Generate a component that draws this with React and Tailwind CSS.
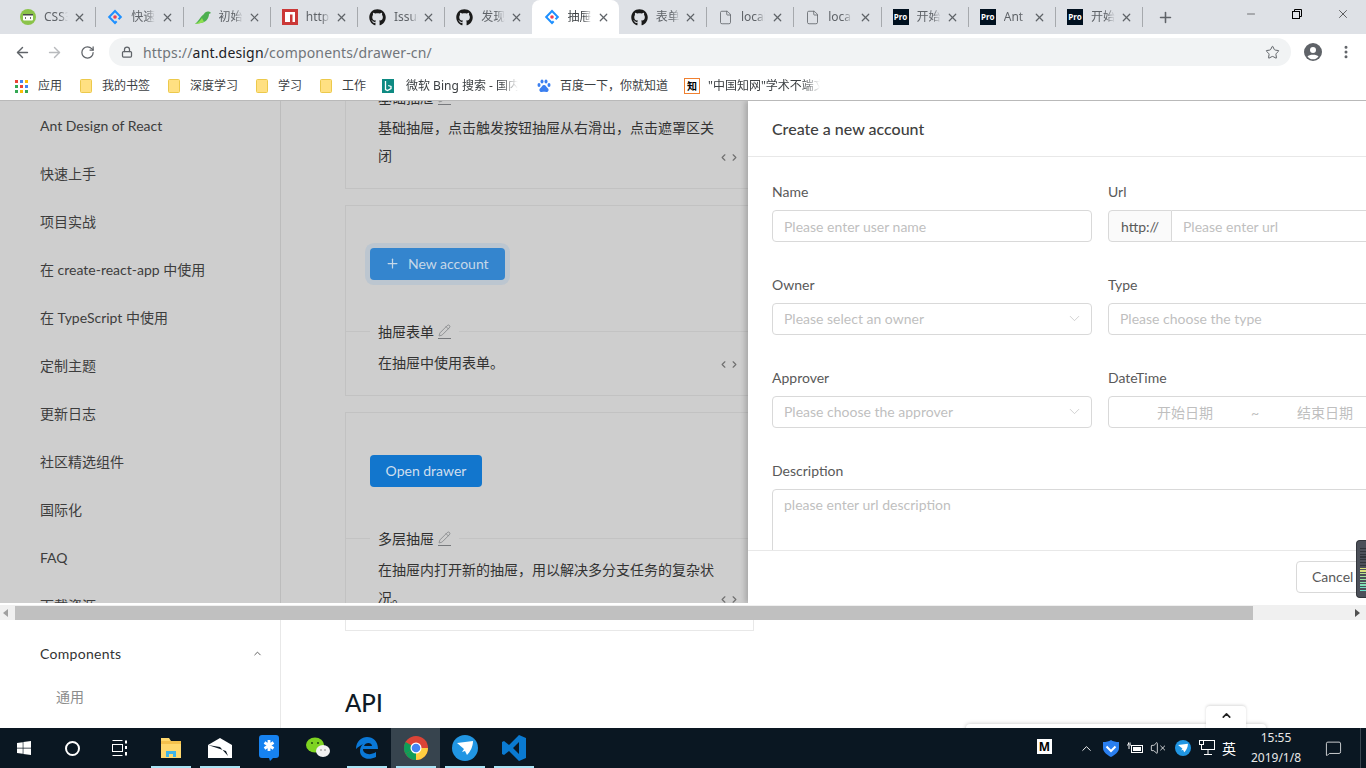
import React from 'react';
import { FaGithub, FaWindows } from 'react-icons/fa';
import { Plus, Minus, X, ArrowLeft, ArrowRight, RotateCw, Lock, Star, EllipsisVertical, ChevronUp, ChevronDown, ChevronLeft, ChevronRight, Pencil, File, VolumeX, MessageSquare } from 'lucide-react';

const AntLogo = ({ size = 16 }) => (
    <svg width={size} height={size} viewBox="0 0 16 16">
        <path d="M8 .5 .8 8 8 15.5l2.4-2.5-1.5-1.4-.9.9L3.6 8 8 3.5l4.4 4.5-1.6 1.6 1.5 1.4L15.2 8z" fill="#1e90ff" />
        <circle cx="8" cy="8" r="1.8" fill="#f04050" />
    </svg>
);

const CssIcon = () => (
    <svg width="16" height="16" viewBox="0 0 16 16">
        <circle cx="8" cy="8" r="8" fill="#8bc34a" />
        <rect x="3" y="5" width="10" height="6.5" rx="1" fill="#fff" />
        <rect x="3" y="5" width="10" height="1.5" fill="#4a4a4a" />
        <path d="M6 8 5 9l1 1M10 8l1 1-1 1" stroke="#4a4a4a" strokeWidth=".8" fill="none" />
    </svg>
);

const BirdIcon = () => (
    <svg width="16" height="16" viewBox="0 0 16 16">
        <path d="M0 15C3 13 5 8 9 5c1-2 3-3 6-2l1 1-2 1c0 5-4 9-9 9-2 0-3 1-5 1z" fill="#4caf50" />
        <path d="M0 15c3-1 5-3 7-6l2 4c-3 1-6 2-9 2z" fill="#8ee04e" />
    </svg>
);

const NpmIcon = () => (
    <svg width="16" height="16" viewBox="0 0 16 16">
        <rect width="16" height="16" fill="#cb3837" />
        <path d="M3 3h10v10h-2.500V5.500H8V13H3z" fill="#fff" />
    </svg>
);

const ProIcon = () => (
    <span className="w-4 h-4 bg-[#00101f] text-white text-[8px] font-bold flex items-center justify-center shrink-0">Pro</span>
);

const Github16 = () => <FaGithub className="text-[17px] text-[#1a1a1a] shrink-0" />;
const FileIcon = () => <File size={15} strokeWidth={1.3} className="text-[#5f6368] shrink-0" />;

const tabs = [
    { icon: <CssIcon />, label: 'CSS3' },
    { icon: <AntLogo />, label: '快速上手' },
    { icon: <BirdIcon />, label: '初始化' },
    { icon: <NpmIcon />, label: 'https' },
    { icon: <Github16 />, label: 'Issues' },
    { icon: <Github16 />, label: '发现问题' },
    { icon: <AntLogo />, label: '抽屉', active: true },
    { icon: <Github16 />, label: '表单组件' },
    { icon: <FileIcon />, label: 'localhost' },
    { icon: <FileIcon />, label: 'localhost' },
    { icon: <ProIcon />, label: '开始使用' },
    { icon: <ProIcon />, label: 'Ant' },
    { icon: <ProIcon />, label: '开始使用' },
];

const Tab = ({ icon, label, active }) => (
    <div className={`relative w-[87.25px] h-[34px] pl-3 pr-[9px] flex items-center shrink-0 ${active ? 'bg-white rounded-t-lg text-[#3c4043]' : 'text-[#5f6368]'}`}>
        {icon}
        <span className="ml-2 w-[24px] overflow-hidden whitespace-nowrap text-[12px] [mask-image:linear-gradient(to_right,black_65%,transparent)]">{label}</span>
        <X size={13} strokeWidth={2.2} className="ml-auto text-[#5f6368] shrink-0" />
        {!active && <span className="absolute -right-px top-[7px] h-5 w-px bg-[#a6a9ad]"></span>}
    </div>
);

const Folder = () => (
    <svg width="12" height="14" viewBox="0 0 12 14" className="shrink-0">
        <rect x=".5" y=".5" width="11" height="13" rx="1" fill="#ffe082" stroke="#ecc94b" />
    </svg>
);

const AppsGrid = () => {
    const colors = ['#ea4335', '#4285f4', '#fbbc05', '#34a853', '#ea4335', '#4285f4', '#34a853', '#fbbc05', '#34a853'];
    return (
        <div className="grid grid-cols-3 gap-[2px] w-[13px] shrink-0">
            {colors.map((c, i) => (
                <span key={i} className="w-[3px] h-[3px]" style={{ background: c }}></span>
            ))}
        </div>
    );
};

const BingIcon = () => (
    <svg width="12" height="14" viewBox="0 0 12 14" className="shrink-0">
        <rect width="12" height="14" fill="#0e8a82" />
        <path d="M3.500 2v8.500l2 1 3.500-2V7.500L6.200 6.500" stroke="#fff" strokeWidth="1.300" fill="none" />
    </svg>
);

const BaiduIcon = () => (
    <svg width="14" height="14" viewBox="0 0 14 14" className="shrink-0">
        <g fill="#3b7ff0">
            <ellipse cx="2" cy="6" rx="1.500" ry="2" />
            <ellipse cx="5" cy="2.500" rx="1.500" ry="2" />
            <ellipse cx="9" cy="2.500" rx="1.500" ry="2" />
            <ellipse cx="12" cy="6" rx="1.500" ry="2" />
            <path d="M7 6c-2 0-2 2-4 3.500C1.500 11 3 13.500 5 13c1-.2 3-.2 4 0 2 .5 3.500-2 2-3.500C9 8 9 6 7 6z" />
        </g>
    </svg>
);

const CnkiIcon = () => (
    <span className="w-4 h-4 border border-[#f08030] bg-white text-[10px] leading-[14px] text-black font-bold text-center shrink-0">知</span>
);

const bookmarks = [
    { icon: <AppsGrid />, label: '应用', cls: 'w-[65px]', gap: 'ml-[10px]' },
    { icon: <Folder />, label: '我的书签', cls: 'w-[88px]', gap: 'ml-[10px]' },
    { icon: <Folder />, label: '深度学习', cls: 'w-[88px]', gap: 'ml-[10px]' },
    { icon: <Folder />, label: '学习', cls: 'w-[64px]', gap: 'ml-[10px]' },
    { icon: <Folder />, label: '工作', cls: 'w-[62px]', gap: 'ml-[10px]' },
    { icon: <BingIcon />, label: '微软 Bing 搜索 - 国内版', cls: 'w-[155px]', gap: 'ml-[12px]', fade: true },
    { icon: <BaiduIcon />, label: '百度一下，你就知道', cls: 'w-[147px]', gap: 'ml-[9px]' },
    { icon: <CnkiIcon />, label: '"中国知网"学术不端文献', cls: 'w-[140px]', gap: 'ml-[8px]', fade: true },
];

const sideItems = ['Ant Design of React', '快速上手', '项目实战', '在 create-react-app 中使用', '在 TypeScript 中使用', '定制主题', '更新日志', '社区精选组件', '国际化', 'FAQ', '下载资源'];

const CodeToggle = () => (
    <div className="flex items-center text-[#6f6f6f]">
        <ChevronLeft size={11} strokeWidth={2.5} />
        <ChevronRight size={11} strokeWidth={2.5} />
    </div>
);

const EditIcon = () => (
    <span className="ml-1 border-b border-[#77797c] pb-[1px] flex">
        <Pencil size={13} strokeWidth={1.2} className="text-[#6f7276]" />
    </span>
);

const DemoTitle = ({ children }) => (
    <div className="flex items-center h-[22px] text-[14px] text-[#303030]">
        <span className="w-6 h-px bg-[#c3c3c3]"></span>
        <span className="px-2 flex items-center">{children}<EditIcon /></span>
        <span className="flex-1 h-px bg-[#c3c3c3]"></span>
    </div>
);

const DemoDesc = ({ text }) => (
    <div className="relative pl-[32px] pr-[34px] text-[14px] leading-[28px] text-[#333333]">
        <p className="w-[344px]">{text}</p>
        <div className="absolute left-[372px] bottom-[7px]">
            <CodeToggle />
        </div>
    </div>
);

const Field = ({ label, children }) => (
    <div className="w-[320px] shrink-0 mb-8">
        <div className="h-[22px] leading-[22px] mb-[7px] text-[14px] text-[#595959]">{label}</div>
        {children}
    </div>
);

const InputBox = ({ text, chevron }) => (
    <div className={`h-8 border border-[#d9d9d9] rounded-[4px] pl-[11px] pr-3 flex items-center justify-between text-[14px] text-[#bfbfbf] ${chevron ? 'pb-px' : ''}`}>
        <span>{text}</span>
        {chevron && <ChevronDown size={17} strokeWidth={1} className="-mr-1 text-[#bfbfbf]" />}
    </div>
);

const Drawer = () => (
    <div className="absolute left-[748px] top-0 bottom-0 right-0 bg-white flex flex-col overflow-hidden shadow-[-3px_0_5px_rgba(0,0,0,0.18)]">
        <div className="h-[56px] shrink-0 border-b border-[#e8e8e8] pl-6 pt-px flex items-center text-[16px] font-medium text-[#404040]">Create a new account</div>
        <div className="flex-1 overflow-hidden pl-6 pt-6">
            <div className="w-[656px] grid grid-cols-[320px_320px] gap-x-4">
                <Field label="Name"><InputBox text="Please enter user name" /></Field>
                <Field label="Url">
                    <div className="h-8 flex text-[14px]">
                        <span className="w-[64px] shrink-0 border border-[#d9d9d9] bg-[#fafafa] rounded-l-[4px] flex items-center justify-center text-[#595959]">http://</span>
                        <span className="flex-1 border border-l-0 border-[#d9d9d9] rounded-r-[4px] pl-[11px] flex items-center text-[#bfbfbf]">Please enter url</span>
                    </div>
                </Field>
                <Field label="Owner"><InputBox text="Please select an owner" chevron /></Field>
                <Field label="Type"><InputBox text="Please choose the type" chevron /></Field>
                <Field label="Approver"><InputBox text="Please choose the approver" chevron /></Field>
                <Field label="DateTime">
                    <div className="h-8 border border-[#d9d9d9] rounded-[4px] flex items-center whitespace-nowrap text-[14px] text-[#bfbfbf]">
                        <span className="w-[104px] text-right">开始日期</span>
                        <span className="w-[84px] text-center">~</span>
                        <span className="w-[56px] text-right">结束日期</span>
                    </div>
                </Field>
            </div>
            <div className="w-[656px]">
                <div className="h-[22px] leading-[22px] mb-[7px] text-[14px] text-[#595959]">Description</div>
                <div className="h-[120px] border border-[#d9d9d9] rounded-[4px] pl-[11px] pr-3 pt-[4px] text-[14px] text-[#bfbfbf]">please enter url description</div>
            </div>
        </div>
        <div className="h-[53px] shrink-0 border-t border-[#e8e8e8] bg-white pt-[10px] pl-[548px]">
            <div className="w-[72px] h-8 border border-[#d9d9d9] rounded-[4px] pl-[15px] pb-px flex items-center text-[14px] text-[#595959]">Cancel</div>
        </div>
    </div>
);

const UpperPanel = () => (
    <div className="relative h-[502px] shrink-0 bg-[#cecece] overflow-hidden flex font-['Lato','Noto_Sans_CJK_SC',sans-serif]">
        <div className="w-[281px] shrink-0 border-r border-[#bcbcbc]">
            {sideItems.map((s) => (
                <div key={s} className="h-12 pl-10 flex items-center text-[14px] text-[#3d3d3d]">{s}</div>
            ))}
        </div>
        <div className="ml-[64px] w-[409px] shrink-0">
            <div className="h-[88px] flex flex-col border border-t-0 border-[#c2c2c2]">
                <div className="-mt-[15px]"><DemoTitle>基础抽屉</DemoTitle></div>
                <div className="mt-[6px]">
                    <DemoDesc text="基础抽屉，点击触发按钮抽屉从右滑出，点击遮罩区关闭" />
                </div>
            </div>
            <div className="mt-4 h-[191px] border border-[#c2c2c2] pt-[42px]">
                <div className="ml-6 w-[135px] h-8 rounded-[4px] bg-[#3485ce] pb-px text-[14px] text-[#c6d8e8] flex items-center pl-[15px] shadow-[0_0_0_5px_#bcc6d0]">
                    <Plus size={15} strokeWidth={2} />
                    <span className="ml-2">New account</span>
                </div>
                <div className="mt-[40px]"><DemoTitle>抽屉表单</DemoTitle></div>
                <div className="mt-[7px]">
                    <DemoDesc text="在抽屉中使用表单。" />
                </div>
            </div>
            <div className="mt-4 h-[240px] border border-[#c2c2c2] pt-[42px]">
                <div className="ml-6 w-[112px] h-8 rounded-[4px] bg-[#1276cd] pb-px text-[14px] text-[#cfdfee] flex items-center justify-center">Open drawer</div>
                <div className="mt-[40px]"><DemoTitle>多层抽屉</DemoTitle></div>
                <div className="mt-[7px]">
                    <DemoDesc text="在抽屉内打开新的抽屉，用以解决多分支任务的复杂状况。" />
                </div>
            </div>
        </div>
        <Drawer />
    </div>
);

const Scrollbar = () => (
    <div className="h-[17px] shrink-0 bg-[#f0f0f0] border-t-2 border-white flex items-center pl-[3px]">
        <span className="w-0 h-0 border-y-[4px] border-y-transparent border-r-[5px] border-r-[#a0a0a0]"></span>
        <span className="ml-[7px] w-[1238px] h-[14px] bg-[#c0c0c0]"></span>
        <span className="ml-auto mr-[6px] w-0 h-0 border-y-[4px] border-y-transparent border-l-[5px] border-l-[#505050]"></span>
    </div>
);

const LowerPanel = () => (
    <div className="relative flex-1 bg-white flex overflow-hidden font-['Lato','Noto_Sans_CJK_SC',sans-serif]">
        <div className="w-[281px] shrink-0 border-r border-[#e8e8e8] pt-[22px]">
            <div className="pl-10 pr-[17px] h-[22px] flex items-center justify-between text-[14px] tracking-[0.3px] text-[#333333]">
                <span>Components</span>
                <ChevronUp size={11} strokeWidth={2} className="text-[#555555]" />
            </div>
            <div className="pl-14 mt-[22px] text-[14px] leading-[22px] text-[#8c8c8c]">通用</div>
        </div>
        <div className="ml-[64px] w-[409px] shrink-0">
            <div className="h-[11px] border border-t-0 border-[#e8e8e8]"></div>
            <h2 className="mt-[56px] text-[24px] leading-[32px] font-medium text-[#0d1a26]">API</h2>
        </div>
        <div className="absolute left-[966px] top-[104px] w-[300px] h-8 bg-white rounded-t-[4px] shadow-[0_0_4px_rgba(0,0,0,0.25)]"></div>
        <div className="absolute left-[1206px] top-[86px] w-10 h-6 bg-white rounded-t-[4px] shadow-[0_-1px_3px_rgba(0,0,0,0.15)] flex justify-center pt-[3px]">
            <ChevronUp size={13} strokeWidth={3} className="text-[#222222]" />
        </div>
    </div>
);

const ChromeIcon = () => (
    <svg width="24" height="24" viewBox="0 0 24 24">
        <circle cx="12" cy="12" r="12" fill="#db4437" />
        <path d="M12 12 1.600 18A12 12 0 0 0 12 24z" fill="#0f9d58" />
        <path d="M1.600 18A12 12 0 0 1 1.600 6L12 12z" fill="#0f9d58" />
        <path d="M12 12h12A12 12 0 0 1 12 24z" fill="#ffcd40" />
        <circle cx="12" cy="12" r="5.500" fill="#fff" />
        <circle cx="12" cy="12" r="4.300" fill="#4285f4" />
    </svg>
);

const PaperPlane = ({ size = 26 }) => (
    <svg width={size} height={size} viewBox="0 0 26 26">
        <circle cx="13" cy="13" r="13" fill="#2196e3" />
        <path d="M5 8 21 6c0 6-3 11-6 14l-2-4-3 1 2-3z" fill="#fff" />
    </svg>
);

const taskItems = [
    { key: 'explorer', icon: (
        <svg width="22" height="20" viewBox="0 0 22 20">
            <path d="M1 0h8l2 3h10v17H1z" fill="#ffd86e" />
            <rect x="1" y="3" width="20" height="3" fill="#f4c14d" />
            <path d="M6 19v-6h10v6h-3v-3H9v3z" fill="#3fb4e8" />
        </svg>
    ), on: true },
    { key: 'mail', icon: (
        <svg width="24" height="20" viewBox="0 0 24 20">
            <path d="M12 0 24 7v13H0V7z" fill="#fff" />
            <path d="M0 7l18 6 2 5L12 9z" fill="#0a1722" />
        </svg>
    ), on: true },
    { key: 'ding', icon: (
        <svg width="20" height="26" viewBox="0 0 20 26">
            <path d="M3 0h14a3 3 0 0 1 3 3v17a3 3 0 0 1-3 3h-3l-3 3-1-3H3a3 3 0 0 1-3-3V3a3 3 0 0 1 3-3z" fill="#1682f0" />
            <path d="M10 5v11M5.500 7.500l9 6M14.500 7.500l-9 6" stroke="#fff" strokeWidth="2.800" />
        </svg>
    ) },
    { key: 'wechat', icon: (
        <svg width="24" height="22" viewBox="0 0 24 22">
            <ellipse cx="9" cy="8" rx="9" ry="7.500" fill="#7ed321" />
            <ellipse cx="17" cy="14" rx="7" ry="6" fill="#f2f2f2" />
            <circle cx="6" cy="6" r="1" fill="#1f4a0d" />
            <circle cx="12" cy="6" r="1" fill="#1f4a0d" />
            <circle cx="15" cy="13" r=".8" fill="#777777" />
            <circle cx="19" cy="13" r=".8" fill="#777777" />
        </svg>
    ) },
    { key: 'edge', icon: (
        <svg width="22" height="22" viewBox="0 0 22 22">
            <path d="M0 12C0 4 6 0 11 0c6 0 11 4 11 12H7c0 5 7 7 13 3v5c-8 4-16 1-16-6 0-3 1-5 3-7-2 1-5 3-7 5zM8 9h8c0-4-7-4-8 0z" fill="#0a78d7" />
        </svg>
    ), on: true },
    { key: 'chrome', icon: <ChromeIcon />, active: true },
    { key: 'feishu', icon: <PaperPlane />, on: true },
    { key: 'vscode', icon: (
        <svg width="24" height="26" viewBox="0 0 24 26">
            <path d="M17 0l7 3v20l-7 3-10-10-5 4-2-1V7l2-1 5 4zM17 7l-6 6 6 6z" fill="#0a7ad1" fillRule="evenodd" />
        </svg>
    ), on: true },
];

const Taskbar = () => (
    <div className="relative h-10 shrink-0 bg-[#0a1722] flex items-center">
        <div className="w-12 flex justify-center text-white"><FaWindows className="text-[16px]" /></div>
        <div className="w-12 flex justify-center"><span className="w-[15px] h-[15px] rounded-full border-2 border-white"></span></div>
        <div className="w-12 flex justify-center">
            <svg width="16" height="16" viewBox="0 0 16 16" fill="none" stroke="#fff">
                <path d="M.5 .5h10M.5 15.500h10" />
                <rect x=".5" y="4.500" width="10" height="7" />
                <path d="M14 .5v3M14 6v3M14 12v3.500" strokeWidth="2" />
            </svg>
        </div>
        <div className="ml-[2px] flex h-full">
            {taskItems.map((t) => (
                <div key={t.key} className={`relative w-[49px] h-full flex items-center justify-center ${t.active ? 'bg-[#37444e]' : ''}`}>
                    {t.icon}
                    {(t.on || t.active) && <span className="absolute bottom-0 left-[5px] right-[4px] h-[2px] bg-[#a9e3f5]"></span>}
                </div>
            ))}
        </div>
        <div className="absolute left-[1037px] top-[11px] w-[15px] h-[15px] bg-white text-black text-[12px] leading-[15px] font-bold text-center">M</div>
        <div className="ml-auto mr-[1px] h-full flex items-center text-white">
            <ChevronUp size={15} strokeWidth={1.5} />
            <svg className="ml-[9px]" width="16" height="17" viewBox="0 0 16 17">
                <path d="M8 0c2 1.500 5 2 8 2v6c0 4-4 7-8 9-4-2-8-5-8-9V2c3 0 6-.5 8-2z" fill="#2a7ff0" />
                <path d="M3.500 6.500 8 11l4.500-4.500" stroke="#fff" strokeWidth="2" fill="none" />
            </svg>
            <svg className="ml-[8px]" width="16" height="12" viewBox="0 0 16 12" fill="none" stroke="#fff">
                <rect x="4.500" y="3.500" width="11" height="7" />
                <rect x="6" y="5" width="8" height="4" fill="#fff" stroke="none" />
                <path d="M0 3h4M1.500 .5v2M3 .5v2M2 4v3" />
            </svg>
            <VolumeX size={16} strokeWidth={1.2} className="ml-[7px]" />
            <span className="ml-[9px] flex"><PaperPlane size={16} /></span>
            <svg className="ml-[8px]" width="16" height="16" viewBox="0 0 16 16" fill="none" stroke="#fff">
                <rect x="2.500" y=".5" width="13" height="9" />
                <rect x=".5" y=".5" width="4" height="4" fill="#0a1722" />
                <path d="M9 10v4M5 14.500h8" />
            </svg>
            <span className="ml-[7px] w-[16px] text-[14px] leading-[14px] font-['Noto_Sans_CJK_SC',sans-serif]">英</span>
            <div className="ml-[3px] w-[70px] text-center text-[12px] leading-[20px] text-[#e8e8e8]">
                <div>15:55</div>
                <div>2019/1/8</div>
            </div>
            <MessageSquare size={17} strokeWidth={1.1} className="ml-[14px] mr-[18px]" />
            <span className="w-px h-full bg-[#3a4650]"></span>
            <span className="w-[4px]"></span>
        </div>
    </div>
);

const volumeTicks = ['#30343a', '#30343a', '#30343a', '#30343a', '#30343a', '#30343a', '#30343a', '#d9e27a', '#d9e27a', '#b8e08a', '#a6e29a', '#9ae2a4', '#8ee2ae', '#82e2b8', '#76e2c2', '#6ae2cc'];

const VolumeWidget = () => (
    <div className="absolute right-0 top-[540px] w-[10px] h-[58px] rounded-l-[4px] bg-[#4c5059] border border-r-0 border-[#33363c] pt-[7px] pl-[3px] flex flex-col gap-[1.500px]">
        {volumeTicks.map((c, i) => (
            <span key={i} className="h-[1.300px] w-full" style={{ background: c }}></span>
        ))}
    </div>
);

export default function App() {
    return (
        <div className="relative w-[1366px] h-[768px] overflow-hidden bg-white flex flex-col font-['Noto_Sans','Noto_Sans_CJK_SC',sans-serif]">
            {/* Tab strip */}
            <div className="relative h-[34px] shrink-0 bg-[#dee1e6] pl-2 flex items-center">
                {tabs.map((t, i) => (
                    <Tab key={i} {...t} />
                ))}
                <Plus size={17} strokeWidth={2.2} className="ml-[15px] text-[#5f6368]" />
                <div className="ml-auto flex items-center h-full text-black -mt-[6px]">
                    <Minus size={12} strokeWidth={1} className="mr-[35px]" />
                    <svg width="10" height="10" viewBox="0 0 10 10" fill="none" stroke="#000" className="mr-[34px]">
                        <rect x=".5" y="2.500" width="7" height="7" />
                        <path d="M2.500 2.500v-2h7v7h-2" />
                    </svg>
                    <X size={14} strokeWidth={1} className="mr-[16px]" />
                </div>
            </div>

            {/* Toolbar */}
            <div className="h-[32px] shrink-0 bg-white flex items-center pt-[4px]">
                <ArrowLeft size={17} strokeWidth={2} className="ml-[14px] text-[#5f6368]" />
                <ArrowRight size={17} strokeWidth={2} className="ml-[15px] text-[#b8babd]" />
                <RotateCw size={15} strokeWidth={2} className="ml-[17px] text-[#5f6368]" />
                <div className="ml-[14px] w-[1182px] h-7 rounded-full bg-[#f1f3f4] flex items-center pl-[12px] pr-[11px]">
                    <Lock size={12} strokeWidth={2.5} className="text-[#5f6368]" />
                    <span className="ml-[10px] text-[14px] tracking-[0.17px] text-[#70757a]">https://<span className="text-[#202124]">ant.design</span>/components/drawer-cn/</span>
                    <Star size={15} strokeWidth={1.6} className="ml-auto text-[#5f6368]" />
                </div>
                <svg width="18" height="18" viewBox="0 0 18 18" className="ml-[13px]">
                    <circle cx="9" cy="9" r="9" fill="#5f6368" />
                    <circle cx="9" cy="7" r="3" fill="#fff" />
                    <path d="M3.500 13.500c1.500-2.500 9.500-2.500 11 0-1.500 2-3.500 2.800-5.500 2.800s-4-.8-5.500-2.800z" fill="#fff" />
                </svg>
                <EllipsisVertical size={16} strokeWidth={2.5} className="ml-[16px] text-[#5f6368]" />
            </div>

            {/* Bookmarks */}
            <div className="h-[35px] shrink-0 bg-white border-b border-[#b9b9b9] flex items-center pl-[15px] pt-[6px]">
                {bookmarks.map((b) => (
                    <div key={b.label} className={`flex items-center shrink-0 ${b.cls}`}>
                        {b.icon}
                        <span className={`${b.gap} overflow-hidden whitespace-nowrap text-[12px] text-[#3c4043] ${b.fade ? 'w-[112px] [mask-image:linear-gradient(to_right,black_85%,transparent)]' : ''}`}>{b.label}</span>
                    </div>
                ))}
            </div>

            <UpperPanel />
            <Scrollbar />
            <LowerPanel />
            <Taskbar />
            <VolumeWidget />
        </div>
    );
}
